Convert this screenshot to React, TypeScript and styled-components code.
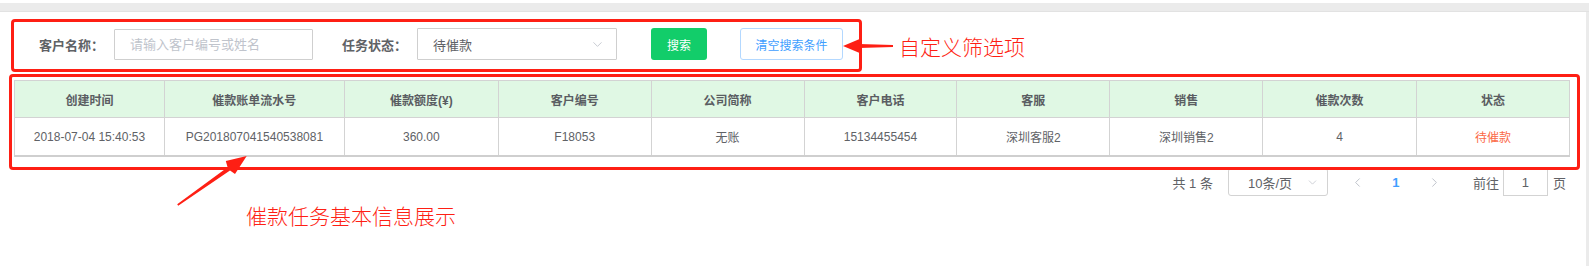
import React from "react";
import styled, { createGlobalStyle } from "styled-components";
import { ChevronDown, ChevronLeft, ChevronRight } from "lucide-react";

const GlobalStyle = createGlobalStyle`
  html, body {
    margin: 0;
    padding: 0;
    background: #ffffff;
    overflow: hidden;
  }
  body {
    font-family: "Liberation Sans", "Noto Sans CJK SC", sans-serif;
    color: #606266;
  }
`;

const RED = "#fe1f14";

// 表头定义（宽度含右边框）
const columns = [
  { title: "创建时间", width: 150 },
  { title: "催款账单流水号", width: 180 },
  { title: "催款额度(¥)", width: 154 },
  { title: "客户编号", width: 153 },
  { title: "公司简称", width: 153 },
  { title: "客户电话", width: 153 },
  { title: "客服", width: 153 },
  { title: "销售", width: 153 },
  { title: "催款次数", width: 154 },
  { title: "状态", width: 153 },
];

const rows = [
  [
    "2018-07-04 15:40:53",
    "PG201807041540538081",
    "360.00",
    "F18053",
    "无账",
    "15134455454",
    "深圳客服2",
    "深圳销售2",
    "4",
    "待催款",
  ],
];

const App = () => {
  return (
    <SPage>
      <GlobalStyle />
      <STopBand />
      <SMain>
        <SContent>
          <SFilterRow>
            <SFilterBox>
              <SLabel>客户名称：</SLabel>
              <SInput placeholder="请输入客户编号或姓名" />
              <SLabel $gap={29}>任务状态：</SLabel>
              <SSelect $width={200}>
                <span>待催款</span>
                <ChevronDown size={15} strokeWidth={1.4} color="#c0c4cc" />
              </SSelect>
              <SSearchButton>搜索</SSearchButton>
              <SClearButton>清空搜索条件</SClearButton>
            </SFilterBox>
            <SNote>自定义筛选项</SNote>
          </SFilterRow>

          <STableBox>
            <STable>
              <colgroup>
                {columns.map((col, index) => (
                  <SCol key={index} $width={col.width} />
                ))}
              </colgroup>
              <thead>
                <tr>
                  {columns.map((col, index) => (
                    <STh key={index}>{col.title}</STh>
                  ))}
                </tr>
              </thead>
              <tbody>
                {rows.map((row, rIndex) => (
                  <tr key={rIndex}>
                    {row.map((cell, cIndex) => (
                      <STd key={cIndex} $status={cIndex === row.length - 1}>
                        {cell}
                      </STd>
                    ))}
                  </tr>
                ))}
              </tbody>
            </STable>
          </STableBox>

          <SPagination>
            <SPageText>共 1 条</SPageText>
            <SSizeSelect>
              <span>10条/页</span>
              <ChevronDown size={13} strokeWidth={1.4} color="#c0c4cc" />
            </SSizeSelect>
            <SPageButton $gap={15}>
              <ChevronLeft size={15} strokeWidth={1.6} color="#c0c4cc" />
            </SPageButton>
            <SPageButton $gap={8} $active>
              1
            </SPageButton>
            <SPageButton $gap={9}>
              <ChevronRight size={15} strokeWidth={1.6} color="#c0c4cc" />
            </SPageButton>
            <SPageText $gap={23}>前往</SPageText>
            <SJumpInput>1</SJumpInput>
            <SPageText $gap={5}>页</SPageText>
          </SPagination>

          <SNote $left={246}>催款任务基本信息展示</SNote>

          {/* 标注箭头 */}
          <SArrow style={{ left: 840, top: 23 }} width="56" height="22">
            <polygon
              points="3,11 22,3 19,9 53,10 53,12 19,13 22,19"
              fill={RED}
            />
          </SArrow>
          <SArrow style={{ left: 170, top: 138 }} width="85" height="62">
            <polygon
              points="76.7,6 55.8,11.1 57.6,17.2 7.2,54.3 8.2,55.7 60,20.4 65,24.1"
              fill={RED}
            />
          </SArrow>
        </SContent>
        <SScrollStrip />
      </SMain>
    </SPage>
  );
};

const SPage = styled.div`
  width: 1589px;
  height: 266px;
  padding-top: 3px;
  box-sizing: border-box;
  display: flex;
  flex-direction: column;
`;

const STopBand = styled.div`
  height: 8px;
  background: #ebebeb;
  border-bottom: 1px solid #e2e2e2;
`;

const SMain = styled.div`
  flex: 1;
  display: flex;
`;

const SContent = styled.div`
  position: relative;
  flex: 1;
  background: #ffffff;
`;

const SScrollStrip = styled.div`
  width: 3px;
  background: #ebebeb;
`;

const SFilterRow = styled.div`
  display: flex;
  align-items: center;
  margin-top: 7px;
  padding-left: 11px;
`;

const SFilterBox = styled.div`
  width: 851px;
  height: 53px;
  box-sizing: border-box;
  border: 3px solid ${RED};
  border-radius: 4px;
  display: flex;
  align-items: center;
  padding: 0 0 3px 25px;
`;

const SLabel = styled.label<{ $gap?: number }>`
  margin-left: ${(p) => p.$gap || 0}px;
  font-size: 13px;
  font-weight: bold;
  color: #5f6266;
  width: 66px;
  white-space: nowrap;
`;

const SInput = styled.input`
  margin-left: 9px;
  width: 199px;
  height: 31px;
  box-sizing: border-box;
  border: 1px solid #cfcfcf;
  border-radius: 1px;
  padding: 0 0 0 15px;
  font-family: inherit;
  font-size: 13px;
  outline: none;

  &::placeholder {
    color: #c0c4cc;
  }
`;

const SSelect = styled.div<{ $width: number }>`
  margin-left: 9px;
  width: ${(p) => p.$width}px;
  height: 32px;
  box-sizing: border-box;
  border: 1px solid #cfcfcf;
  border-radius: 1px;
  display: flex;
  align-items: center;
  justify-content: space-between;
  padding: 0 11px 0 15px;
  font-size: 13px;
  color: #606266;
`;

const SSearchButton = styled.button`
  margin-left: 34px;
  width: 56px;
  height: 32px;
  border: none;
  border-radius: 3px;
  background: #12cd6a;
  color: #ffffff;
  font-family: inherit;
  font-size: 12px;
  cursor: pointer;
`;

const SClearButton = styled.button`
  margin-left: 33px;
  width: 103px;
  height: 32px;
  border: 1px solid #b3d8ff;
  border-radius: 3px;
  background: #ffffff;
  color: #409eff;
  font-family: inherit;
  font-size: 12px;
  cursor: pointer;
`;

const SNote = styled.div<{ $left?: number }>`
  margin-left: ${(p) => (p.$left !== undefined ? p.$left : 37)}px;
  margin-top: ${(p) => (p.$left !== undefined ? 8 : 0)}px;
  font-family: "Noto Sans CJK SC", sans-serif;
  font-size: 21px;
  font-weight: 300;
  line-height: 22px;
  color: ${RED};
  white-space: nowrap;
`;

const STableBox = styled.div`
  position: relative;
  z-index: 1;
  margin: 2px 0 0 9px;
  width: 1571px;
  height: 96px;
  box-sizing: border-box;
  border: 3px solid ${RED};
  border-radius: 4px;
  padding: 3px 7px 10px 2px;
  overflow: hidden;
`;

const STable = styled.table`
  width: 1556px;
  border-collapse: collapse;
  table-layout: fixed;
  font-size: 12px;
`;

const SCol = styled.col<{ $width: number }>`
  width: ${(p) => p.$width - 1}px;
`;

const STh = styled.th`
  height: 36px;
  padding: 0;
  background: #e0f8e4;
  border: 1px solid #d3d3d3;
  color: #5a5d62;
  font-weight: bold;
  text-align: center;
`;

const STd = styled.td<{ $status?: boolean }>`
  height: 37px;
  padding: 0;
  border: 1px solid #d3d3d3;
  border-bottom: 2px solid #cfcfcf;
  color: ${(p) => (p.$status ? "#fb6a47" : "#606266")};
  text-align: center;
`;

const SPagination = styled.div`
  display: flex;
  justify-content: flex-end;
  align-items: center;
  margin-top: -2px;
  padding-right: 20px;
  height: 28px;
  font-size: 13px;
  color: #606266;
`;

const SPageText = styled.span<{ $gap?: number }>`
  margin-left: ${(p) => p.$gap || 0}px;
  white-space: nowrap;
`;

const SSizeSelect = styled.div`
  margin-left: 15px;
  width: 100px;
  height: 28px;
  box-sizing: border-box;
  border: 1px solid #d3d3d3;
  border-radius: 3px;
  display: flex;
  align-items: center;
  justify-content: space-between;
  padding: 0 8px 0 19px;
`;

const SPageButton = styled.div<{ $gap: number; $active?: boolean }>`
  margin-left: ${(p) => p.$gap}px;
  width: 30px;
  height: 28px;
  display: flex;
  align-items: center;
  justify-content: center;
  color: ${(p) => (p.$active ? "#409eff" : "#c0c4cc")};
  font-weight: ${(p) => (p.$active ? "bold" : "normal")};
`;

const SJumpInput = styled.div`
  margin-left: 4px;
  width: 45px;
  height: 28px;
  box-sizing: border-box;
  border: 1px solid #d3d3d3;
  display: flex;
  align-items: center;
  justify-content: center;
`;

const SArrow = styled.svg`
  position: absolute;
  z-index: 2;
  overflow: visible;
`;

export default App;
